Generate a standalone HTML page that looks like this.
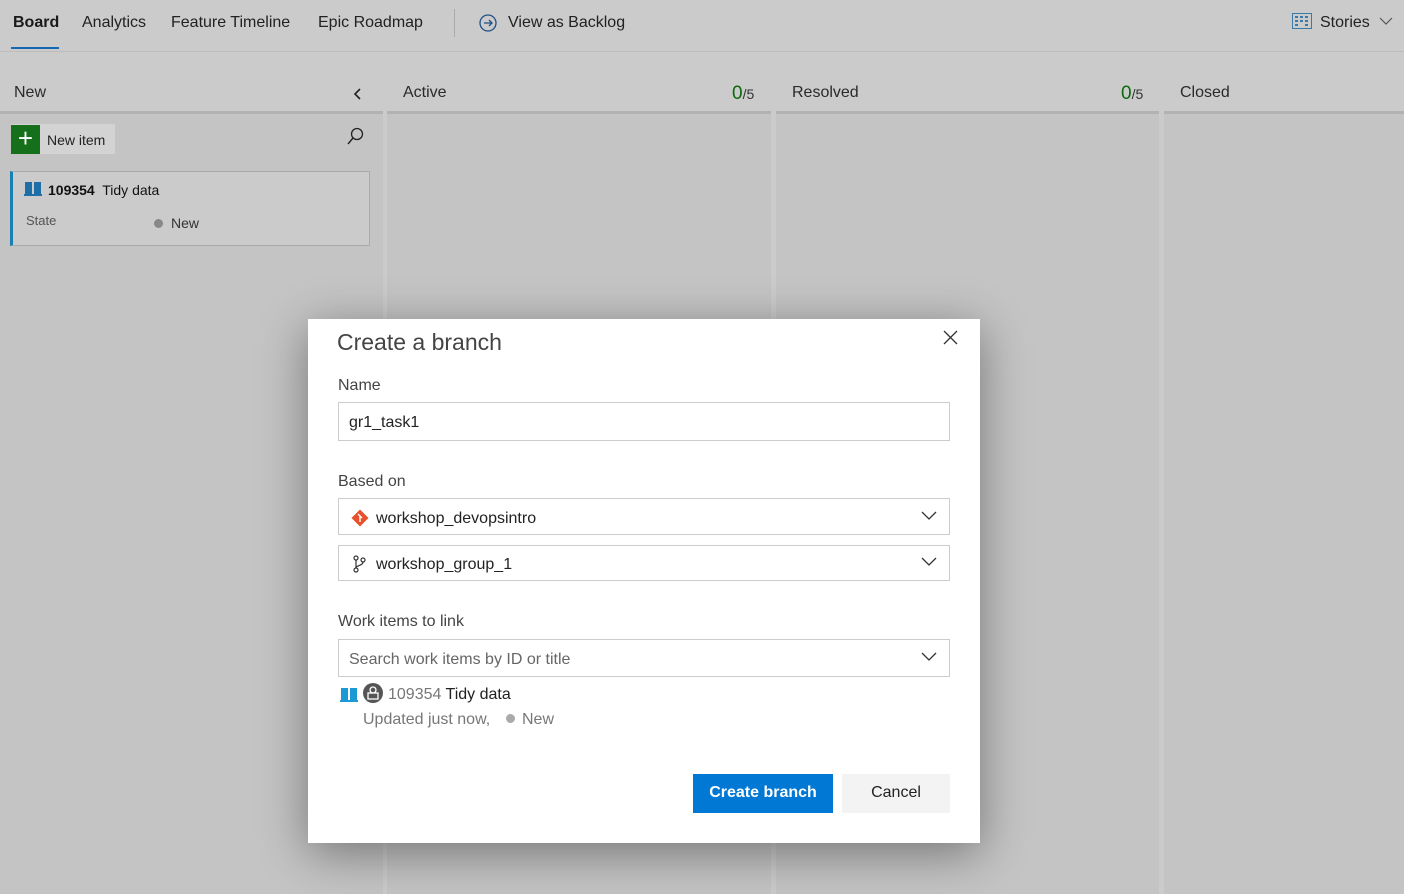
<!DOCTYPE html>
<html><head><meta charset="utf-8"><style>
*{box-sizing:border-box;margin:0;padding:0}
body{width:1404px;height:894px;overflow:hidden;background:#cbcbcb;font-family:"Segoe UI","Liberation Sans",sans-serif;position:relative;color:#1e1e1e}
.a{position:absolute}
.nav{font-size:16px;color:#222;top:14px}
.col{position:absolute;top:114px;height:780px;background:#c4c4c4}
.line{position:absolute;top:111px;height:3px;background:#b2b2b2}
.hd{position:absolute;top:84px;font-size:16px;color:#2a2a2a}
.cnt{position:absolute;top:83px;font-size:19px;color:#0b6a0b}
.cnt small{font-size:14px;color:#333}
.dlg{position:absolute;left:308px;top:319px;width:672px;height:524px;background:#fff;box-shadow:0 10px 45px rgba(0,0,0,.4)}
.lbl{position:absolute;left:30px;font-size:16px;color:#444}
.inp{position:absolute;left:30px;width:612px;border:1px solid #ccc;font-size:16px;color:#222;padding-left:10px}
.chev{position:absolute;right:12px;top:50%;margin-top:-6px}
</style></head><body>
<div class="a" style="left:0;top:51px;width:1404px;height:1px;background:#bdbdbd"></div>
<div class="a nav" style="left:13px;font-weight:bold;color:#1a1a1a">Board</div>
<div class="a" style="left:11px;top:47px;width:48px;height:2px;background:#1467b0"></div>
<div class="a nav" style="left:82px">Analytics</div>
<div class="a nav" style="left:171px">Feature Timeline</div>
<div class="a nav" style="left:318px">Epic Roadmap</div>
<div class="a" style="left:454px;top:9px;width:1px;height:28px;background:#aaa"></div>
<svg class="a" style="left:479px;top:14px" width="18" height="18" viewBox="0 0 18 18"><circle cx="9" cy="9" r="8" fill="none" stroke="#1f4f85" stroke-width="1.3"/><path d="M5 9h8M10 6l3 3-3 3" fill="none" stroke="#1f4f85" stroke-width="1.3"/></svg>
<div class="a nav" style="left:508px">View as Backlog</div>
<svg class="a" style="left:1292px;top:13px" width="20" height="16" viewBox="0 0 20 16"><rect x="0.5" y="0.5" width="19" height="15" fill="none" stroke="#3a79a8"/><g fill="#3a79a8"><rect x="3" y="3" width="3" height="2"/><rect x="8" y="3" width="3" height="2"/><rect x="13" y="3" width="3" height="2"/><rect x="3" y="7" width="3" height="2"/><rect x="8" y="7" width="3" height="2"/><rect x="13" y="7" width="3" height="2"/><rect x="3" y="11" width="3" height="2"/><rect x="13" y="11" width="3" height="2"/></g></svg>
<div class="a nav" style="left:1320px">Stories</div>
<svg class="a" style="left:1379px;top:17px" width="14" height="9"><path d="M1 1l6 6 6-6" fill="none" stroke="#555" stroke-width="1.2"/></svg>

<div class="line" style="left:0;width:383px"></div><div class="line" style="left:387px;width:384px"></div><div class="line" style="left:776px;width:383px"></div><div class="line" style="left:1164px;width:240px"></div>
<div class="col" style="left:0;width:383px"></div><div class="col" style="left:387px;width:384px"></div><div class="col" style="left:776px;width:383px"></div><div class="col" style="left:1164px;width:240px"></div>
<div class="hd" style="left:14px">New</div>
<svg class="a" style="left:353px;top:87px" width="10" height="14"><path d="M7 2L2 7l5 5" fill="none" stroke="#222" stroke-width="1.6"/></svg>
<div class="hd" style="left:403px">Active</div><div class="cnt" style="left:732px">0<small>/5</small></div>
<div class="hd" style="left:792px">Resolved</div><div class="cnt" style="left:1121px">0<small>/5</small></div>
<div class="hd" style="left:1180px">Closed</div>

<div class="a" style="left:11px;top:124px;width:104px;height:30px;background:#d3d3d3"></div>
<div class="a" style="left:11px;top:125px;width:29px;height:29px;background:#166f1a;color:#fff;font-size:26px;line-height:27px;text-align:center">+</div>
<div class="a" style="left:47px;top:132px;font-size:14px;color:#222">New item</div>
<svg class="a" style="left:346px;top:127px" width="18" height="20"><circle cx="11" cy="7" r="5.5" fill="none" stroke="#222" stroke-width="1.3"/><path d="M7 11l-5 6" stroke="#222" stroke-width="1.4"/></svg>
<div class="a" style="left:10px;top:171px;width:360px;height:75px;background:#cbcbcb;border:1px solid #aaa;border-left:3px solid #1a7fb3"></div>
<svg class="a" style="left:24px;top:181px" width="18" height="15"><rect x="1" y="1" width="7" height="12" fill="#1e6fa8"/><rect x="10" y="1" width="7" height="12" fill="#1e6fa8"/><rect x="0" y="13" width="18" height="2" fill="#1e6fa8"/></svg>
<div class="a" style="left:48px;top:182px;font-size:14px;color:#111"><b>109354</b>&nbsp; Tidy data</div>
<div class="a" style="left:26px;top:213px;font-size:13px;color:#555">State</div>
<div class="a" style="left:154px;top:219px;width:9px;height:9px;border-radius:50%;background:#888"></div>
<div class="a" style="left:171px;top:215px;font-size:14px;color:#333">New</div>

<div class="dlg">
<div class="a" style="left:29px;top:10px;font-size:23px;color:#444">Create a branch</div>
<svg class="a" style="left:635px;top:11px" width="15" height="15"><path d="M1 1l13 13M14 1L1 14" stroke="#333" stroke-width="1.3"/></svg>
<div class="lbl" style="top:58px">Name</div>
<div class="inp" style="top:83px;height:39px;line-height:40px">gr1_task1</div>
<div class="lbl" style="top:154px">Based on</div>
<div class="inp" style="top:179px;height:37px;line-height:39px;padding-left:37px">workshop_devopsintro
<svg class="a" style="left:12px;top:10px" width="18" height="18" viewBox="0 0 18 18"><rect x="3" y="3" width="12" height="12" transform="rotate(45 9 9)" fill="#e8512b"/><path d="M7 5l4 4M9 7v6" stroke="#fff" stroke-width="1.4"/></svg>
<svg class="chev" width="16" height="10"><path d="M1 1l7 7 7-7" fill="none" stroke="#333" stroke-width="1.3"/></svg></div>
<div class="inp" style="top:226px;height:36px;line-height:38px;padding-left:37px">workshop_group_1
<svg class="a" style="left:13px;top:9px" width="16" height="18" viewBox="0 0 16 18"><circle cx="4" cy="3" r="2" fill="none" stroke="#333" stroke-width="1.2"/><circle cx="4" cy="15" r="2" fill="none" stroke="#333" stroke-width="1.2"/><circle cx="11" cy="5" r="2" fill="none" stroke="#333" stroke-width="1.2"/><path d="M4 5v8M11 7c0 4-7 3-7 6" fill="none" stroke="#333" stroke-width="1.2"/></svg>
<svg class="chev" width="16" height="10"><path d="M1 1l7 7 7-7" fill="none" stroke="#333" stroke-width="1.3"/></svg></div>
<div class="lbl" style="top:294px">Work items to link</div>
<div class="inp" style="top:320px;height:38px;line-height:39px;color:#666">Search work items by ID or title
<svg class="chev" width="16" height="10"><path d="M1 1l7 7 7-7" fill="none" stroke="#333" stroke-width="1.3"/></svg></div>
<svg class="a" style="left:32px;top:368px" width="18" height="15"><rect x="1" y="1" width="7" height="12" fill="#1c9ad6"/><rect x="10" y="1" width="7" height="12" fill="#1c9ad6"/><rect x="0" y="13" width="18" height="2" fill="#1c9ad6"/></svg>
<svg class="a" style="left:55px;top:364px" width="20" height="20"><circle cx="10" cy="10" r="10" fill="#555"/><circle cx="10" cy="7" r="3" fill="none" stroke="#fff" stroke-width="1.3"/><rect x="5" y="10" width="10" height="6" fill="none" stroke="#fff" stroke-width="1.3"/></svg>
<div class="a" style="left:80px;top:367px;font-size:16px;color:#777">109354 <span style="color:#222">Tidy data</span></div>
<div class="a" style="left:55px;top:392px;font-size:16px;color:#777">Updated just now,</div>
<div class="a" style="left:198px;top:395px;width:9px;height:9px;border-radius:50%;background:#aaa"></div>
<div class="a" style="left:214px;top:392px;font-size:16px;color:#777">New</div>
<div class="a" style="left:385px;top:455px;width:140px;height:39px;background:#0078d4;color:#fff;font-size:16px;font-weight:bold;text-align:center;line-height:38px">Create branch</div>
<div class="a" style="left:534px;top:455px;width:108px;height:39px;background:#f3f3f3;color:#222;font-size:16px;text-align:center;line-height:38px">Cancel</div>
</div>
</body></html>
